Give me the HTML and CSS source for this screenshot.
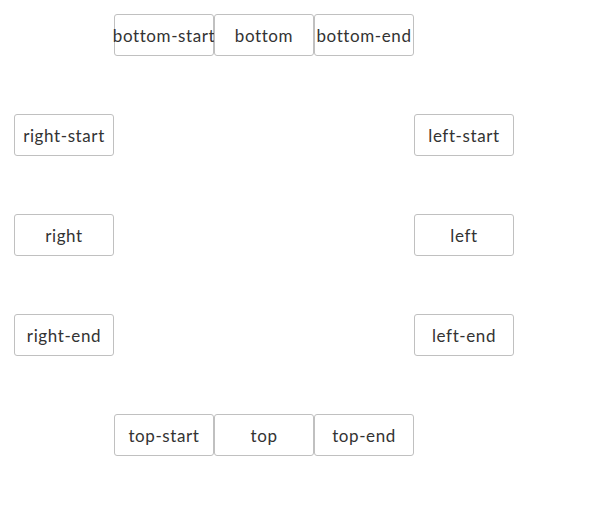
FILE: index.html
```html
<!DOCTYPE html>
<html>
<head>
<meta charset="utf-8">
<link rel="stylesheet" href="styles.css">
</head>
<body>
<div class="board">
  <div class="row top-row">
    <button class="btn">bottom-start</button>
    <button class="btn">bottom</button>
    <button class="btn">bottom-end</button>
  </div>
  <div class="side-row">
    <button class="btn">right-start</button>
    <button class="btn">left-start</button>
  </div>
  <div class="side-row">
    <button class="btn">right</button>
    <button class="btn">left</button>
  </div>
  <div class="side-row">
    <button class="btn">right-end</button>
    <button class="btn">left-end</button>
  </div>
  <div class="row top-row">
    <button class="btn">top-start</button>
    <button class="btn">top</button>
    <button class="btn">top-end</button>
  </div>
</div>
</body>
</html>
```
FILE: styles.css
```css
html, body {
  margin: 0;
  padding: 0;
  background: #fff;
}
.board {
  padding: 14px;
  display: flex;
  flex-direction: column;
  gap: 58px;
}
.row {
  display: flex;
  padding-left: 100px;
}
.side-row {
  display: flex;
  gap: 300px;
}
.btn {
  width: 100px;
  height: 42px;
  box-sizing: border-box;
  border: 1px solid #c0c0c0;
  border-radius: 3px;
  background: #fff;
  padding: 1px 0 0;
  margin: 0;
  font-family: Lato, sans-serif;
  font-size: 17px;
  font-weight: 400;
  letter-spacing: 0.6px;
  color: #333;
  white-space: nowrap;
  display: flex;
  align-items: center;
  justify-content: center;
  overflow: visible;
}
```
